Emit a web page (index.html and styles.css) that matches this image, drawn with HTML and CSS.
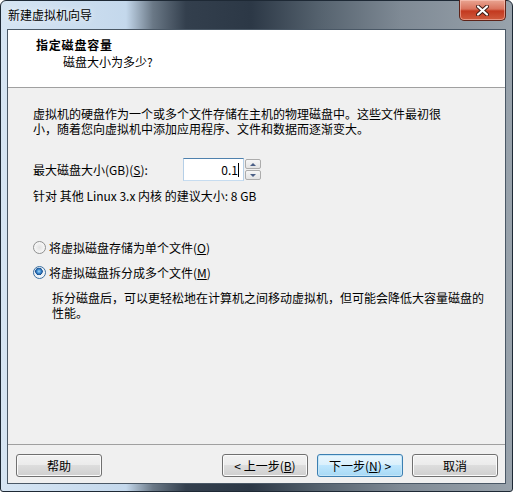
FILE: index.html
```html
<!DOCTYPE html>
<html lang="zh-CN">
<head>
    <meta charset="UTF-8">
    <title>新建虚拟机向导</title>
    <link rel="stylesheet" href="styles.css">
</head>
<body>
    <div class="window">
        <div class="titlebar">
            <span class="title">新建虚拟机向导</span>
            <button class="close" title="关闭">
                <svg width="13" height="11" viewBox="0 0 13 11">
                    <path d="M2 1.5 L11 9.5 M11 1.5 L2 9.5" stroke="#3b1a14" stroke-width="4" stroke-linecap="round"/>
                    <path d="M2 1.5 L11 9.5 M11 1.5 L2 9.5" stroke="#ffffff" stroke-width="2.2" stroke-linecap="round"/>
                </svg>
            </button>
        </div>

        <div class="client">
            <div class="header">
                <div class="header-title">指定磁盘容量</div>
                <div class="header-sub">磁盘大小为多少?</div>
            </div>

            <div class="content">
                <p class="intro">虚拟机的硬盘作为一个或多个文件存储在主机的物理磁盘中。这些文件最初很<br>小，随着您向虚拟机中添加应用程序、文件和数据而逐渐变大。</p>

                <div class="size-row">
                    <label class="size-label" for="diskSize">最大磁盘大小(GB)(<u>S</u>):</label>
                    <div class="field" id="diskSize">0.1<span class="caret"></span></div>
                    <div class="spin">
                        <span class="spin-btn"><i class="arrow-up"></i></span>
                        <span class="spin-btn"><i class="arrow-down"></i></span>
                    </div>
                </div>

                <p class="hint">针对 其他 Linux 3.x 内核 的建议大小: 8 GB</p>

                <label class="radio radio-first">
                    <span class="dot"></span>将虚拟磁盘存储为单个文件(<u>O</u>)
                </label>
                <label class="radio">
                    <span class="dot checked"></span>将虚拟磁盘拆分成多个文件(<u>M</u>)
                </label>
                <p class="radio-note">拆分磁盘后，可以更轻松地在计算机之间移动虚拟机，但可能会降低大容量磁盘的<br>性能。</p>
            </div>

            <div class="footer">
                <button class="btn">帮助</button>
                <div class="nav">
                    <button class="btn">&lt; 上一步(<u>B</u>)</button>
                    <button class="btn default">下一步(<u>N</u>) &gt;</button>
                    <button class="btn">取消</button>
                </div>
            </div>
        </div>
    </div>
</body>
</html>
```

FILE: styles.css
```css
body {
    margin: 0;
    font-family: "Noto Sans CJK SC", "Liberation Sans", sans-serif;
    font-size: 12px;
    color: #000;
}
.window {
    width: 513px;
    height: 492px;
    box-sizing: border-box;
    border: 1px solid #1e2935;
    border-radius: 6px 6px 3px 3px;
    padding: 0 6px 7px 6px;
    display: flex;
    flex-direction: column;
    background: linear-gradient(to right, #d6e5f3 0, #c4d8ec 125px, #6a7886 152px, #333f4d 185px, #2c3846 250px, #56636f 320px, #7f8a95 400px, #99a3ac 513px);
}
.titlebar {
    height: 28px;
    display: flex;
    align-items: flex-start;
}
.title {
    padding: 6px 0 0 1px;
    line-height: 16px;
    text-shadow: 0 0 6px rgba(255, 255, 255, 0.9);
}
.close {
    margin-left: auto;
    margin-top: -1px;
    width: 47px;
    height: 21px;
    padding: 0;
    border: 1px solid #5e2318;
    border-top: none;
    border-radius: 0 0 5px 5px;
    background: linear-gradient(#e9a592 0%, #d9735d 45%, #c3391f 55%, #cf5b3e 100%);
    box-shadow: inset 0 0 0 1px rgba(255, 210, 200, 0.5);
    display: flex;
    align-items: center;
    justify-content: center;
}
.client {
    flex: 1;
    border: 1px solid #4a5866;
    background: #f0f0f0;
    display: flex;
    flex-direction: column;
}
.header {
    height: 58px;
    box-sizing: border-box;
    background: #fff;
    border-bottom: 1px solid #a0a0a0;
    padding: 7px 0 0 28px;
}
.header-title {
    font-weight: bold;
    letter-spacing: 0.8px;
    line-height: 16px;
}
.header-sub {
    line-height: 16px;
    margin-top: 1px;
    padding-left: 27px;
}
.content {
    padding: 18px 0 0 25px;
    line-height: 15px;
}
.content p {
    margin: 0;
}
.size-row {
    display: flex;
    align-items: center;
    margin-top: 22px;
    height: 23px;
}
.size-label {
    width: 150px;
}
.field {
    width: 61px;
    height: 23px;
    box-sizing: border-box;
    border: 1px solid;
    border-color: #4f81ad #b5cfe7 #c6dcf0 #b5cfe7;
    background: #fff;
    text-align: right;
    padding: 3px 4px 0 0;
    line-height: 15px;
}
.caret {
    display: inline-block;
    width: 1px;
    height: 14px;
    background: #000;
    vertical-align: -2px;
}
.spin {
    display: flex;
    flex-direction: column;
    gap: 1px;
    margin-left: 1px;
}
.spin-btn {
    width: 16px;
    height: 10px;
    box-sizing: border-box;
    border: 1px solid #acacac;
    border-radius: 2px;
    background: linear-gradient(#f6f6f6, #e3e3e3);
    display: flex;
    align-items: center;
    justify-content: center;
}
.arrow-up {
    border-left: 3px solid transparent;
    border-right: 3px solid transparent;
    border-bottom: 3px solid #4b5f86;
}
.arrow-down {
    border-left: 3px solid transparent;
    border-right: 3px solid transparent;
    border-top: 3px solid #4b5f86;
}
.hint {
    margin-top: 7px !important;
}
.radio {
    display: flex;
    align-items: center;
    margin-top: 10px;
}
.radio-first {
    margin-top: 37px;
}
.dot {
    width: 13px;
    height: 13px;
    box-sizing: border-box;
    border-radius: 50%;
    border: 1px solid #8f9090;
    background: radial-gradient(circle at 50% 50%, #e2e2e2 0, #f2f2f2 4px, #f8f8f8 6px);
    margin-right: 3px;
}
.dot.checked {
    border-color: #3c6fa0;
    background: radial-gradient(circle at 45% 40%, #a6d8f8 0, #3a8ad0 2px, #1c4f8f 3.5px, #e6eef4 4px, #f4f7fa 6px);
}
.radio-note {
    margin-top: 10px !important;
    padding-left: 19px;
}
.footer {
    margin-top: auto;
    border-top: 1px solid #a0a0a0;
    padding: 9px 7px 6px 8px;
    display: flex;
    justify-content: space-between;
}
.nav {
    display: flex;
    gap: 9px;
}
.btn {
    width: 86px;
    height: 23px;
    padding: 0;
    font-family: inherit;
    font-size: 12px;
    color: #000;
    border: 1px solid #707070;
    border-radius: 3px;
    background: linear-gradient(#f2f2f2 0%, #ebebeb 50%, #dddddd 50%, #cfcfcf 100%);
    box-shadow: inset 0 0 0 1px #fbfbfb;
}
.btn.default {
    border-color: #3c7fb1;
    background: linear-gradient(#eaf6fd 0%, #d9f0fc 50%, #bee6fd 50%, #a7d9f5 100%);
    box-shadow: inset 0 0 0 1px #c6e6f8;
}
```
